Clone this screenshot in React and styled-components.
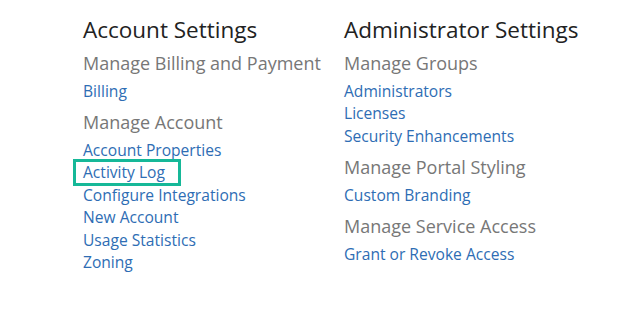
import React from 'react';
import styled, { createGlobalStyle } from 'styled-components';

const Global = createGlobalStyle`
    body {
        margin: 0;
        background: #ffffff;
        font-family: "Open Sans", "Noto Sans", sans-serif;
    }
`

const Page = styled.div`
    display: grid;
    grid-template-columns: 261px auto;
    padding: 17px 0 0 83px;
    width: 618px;
    height: 310px;
    box-sizing: border-box;
`

const Column = styled.section`
    display: flex;
    flex-direction: column;
`

const Heading = styled.h2`
    margin: 0;
    font-size: 22.5px;
    line-height: 26px;
    font-weight: 400;
    color: #222;
`

const Group = styled.div`
    display: flex;
    flex-direction: column;
    margin-top: 6.25px;
`

const SubHeading = styled.h3`
    margin: 0 0 2.5px;
    font-size: 18px;
    line-height: 28px;
    font-weight: 400;
    color: #777;
`

const LinkItem = styled.a`
    position: relative;
    align-self: flex-start;
    font-size: 15.6px;
    line-height: 22.4px;
    color: #2e6db4;
    text-decoration: none;
    cursor: pointer;
    &::after {
        content: '';
        display: ${props => props.highlight ? 'block' : 'none'};
        position: absolute;
        top: -2.5px;
        left: -10px;
        width: 108px;
        height: 27px;
        border: 3px solid #16b898;
        box-sizing: border-box;
    }
`

const columns = [
    {
        title: 'Account Settings',
        groups: [
            { name: 'Manage Billing and Payment', links: ['Billing'] },
            {
                name: 'Manage Account',
                links: ['Account Properties', 'Activity Log', 'Configure Integrations', 'New Account', 'Usage Statistics', 'Zoning'],
            },
        ],
    },
    {
        title: 'Administrator Settings',
        groups: [
            { name: 'Manage Groups', links: ['Administrators', 'Licenses', 'Security Enhancements'] },
            { name: 'Manage Portal Styling', links: ['Custom Branding'] },
            { name: 'Manage Service Access', links: ['Grant or Revoke Access'] },
        ],
    },
]

const App = () => {
    return (
        <>
            <Global />
            <Page>
                {columns.map(col => (
                    <Column key={col.title}>
                        <Heading>{col.title}</Heading>
                        {col.groups.map(group => (
                            <Group key={group.name}>
                                <SubHeading>{group.name}</SubHeading>
                                {group.links.map(link => (
                                    <LinkItem key={link} highlight={link === 'Activity Log'}>
                                        {link}
                                    </LinkItem>
                                ))}
                            </Group>
                        ))}
                    </Column>
                ))}
            </Page>
        </>
    )
}

export default App;
